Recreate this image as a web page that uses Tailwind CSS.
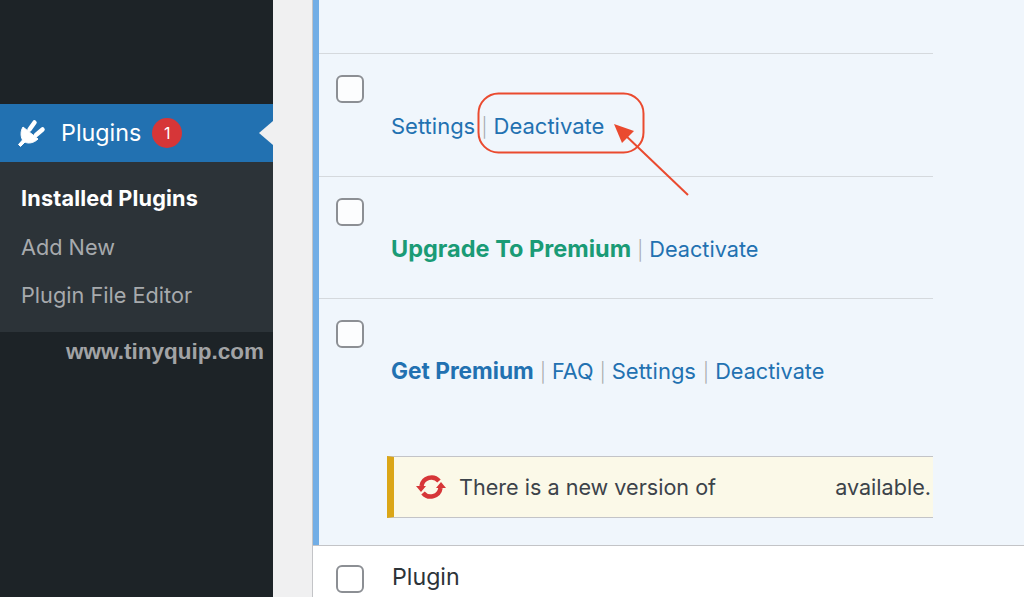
<!DOCTYPE html>
<html lang="en">
<head>
    <meta charset="UTF-8" />
    <title>Plugins</title>
    <script src="https://cdn.jsdelivr.net/npm/@tailwindcss/browser@4"></script>
</head>
<body class="bg-[#f0f0f1] font-['Inter','Liberation_Sans',sans-serif] overflow-hidden">
<div class="relative flex h-[597px] w-[1024px] overflow-hidden">
    <!-- sidebar -->
    <aside class="w-[273px] shrink-0 bg-[#1d2327] pt-[104px]">
        <div class="relative flex h-[58px] items-center bg-[#2271b1] pl-[17px] text-white">
            <svg class="h-[29px] w-[29px]" viewBox="0 0 29 29" fill="#fff" stroke="#fff" stroke-linejoin="round">
                <path stroke-width="1" d="M6 8L21 20C17 24 11 25 8 23L3.5 27.5 1.5 25.5 5.5 21C3.5 17 3.5 12 6 8z" />
                <path stroke-width="4.5" stroke-linecap="round" d="M12.5 10.5L17.5 3.5M19 16L25.5 10.5" />
            </svg>
            <span class="ml-[15px] text-[23.3px] leading-none">Plugins</span>
            <span class="ml-[11px] flex h-[30px] w-[30px] items-center justify-center rounded-full bg-[#d63638] text-[16px] leading-none">1</span>
            <span class="absolute right-0 top-[17px] h-0 w-0 border-y-[12px] border-r-[14px] border-y-transparent border-r-[#f0f0f1]"></span>
        </div>
        <nav class="flex h-[170px] flex-col bg-[#2c3338] pl-[21px] pt-[12px] text-[21.7px] leading-[48.5px] text-[#a7aaad]">
            <a class="font-bold tracking-[0.15px] text-white">Installed Plugins</a>
            <a>Add New</a>
            <a>Plugin File Editor</a>
        </nav>
        <p class="ml-[66px] mt-[6px] text-[22.5px] font-bold leading-[28px] text-[#a2a3a5] font-['Liberation_Sans',sans-serif]">www.tinyquip.com</p>
    </aside>

    <!-- plugin table -->
    <main class="ml-[39px] flex-1 border-l border-[#c3c4c7]">
        <section class="border-l-[6px] border-[#72aee6] bg-[#f0f6fc] h-[545px] pr-[91px]">
            <div class="h-[54px] border-b border-[#d5d9dd]"></div>
            <div class="h-[123px] border-b border-[#d5d9dd] pl-[17px] pt-[21px]">
                <span class="block h-[28px] w-[28px] rounded-[6px] border-2 border-[#8c8f94] bg-white/80"></span>
                <p class="ml-[55px] mt-[7px] text-[22px] leading-[32px] text-[#2271b1]">Settings <span class="text-[19px] font-light text-[#a7aaad]">|</span> Deactivate</p>
            </div>
            <div class="h-[122px] border-b border-[#d5d9dd] pl-[17px] pt-[21px]">
                <span class="block h-[28px] w-[28px] rounded-[6px] border-2 border-[#8c8f94] bg-white/80"></span>
                <p class="ml-[55px] mt-[7px] text-[21.7px] leading-[32px] text-[#2271b1]"><b class="text-[23.5px] font-bold text-[#1a9b76]">Upgrade To Premium</b> <span class="text-[19px] font-light text-[#a7aaad]">|</span> Deactivate</p>
            </div>
            <div class="pl-[17px] pt-[21px]">
                <span class="block h-[28px] w-[28px] rounded-[6px] border-2 border-[#8c8f94] bg-white/80"></span>
                <p class="ml-[55px] mt-[7px] text-[21.7px] leading-[32px] text-[#2271b1]"><b class="text-[22.7px] font-bold">Get Premium</b> <span class="text-[19px] font-light text-[#a7aaad]">|</span> FAQ <span class="text-[19px] font-light text-[#a7aaad]">|</span> <span class="text-[22px]">Settings</span> <span class="ml-[1px] text-[19px] font-light text-[#a7aaad]">|</span> Deactivate</p>
                <div class="mt-[67px] ml-[51px] flex h-[62px] items-center border-y border-[#c3c4c7] border-l-[7px] border-l-[#dba617] bg-[#fbf9e8] pl-[22px] text-[21.6px] text-[#3c434a]">
                    <svg class="h-[24px] w-[30px] shrink-0" viewBox="0 0 30 24" fill="none">
                        <path d="M5.5 11A10 10 0 0 1 23 6" stroke="#d63638" stroke-width="4.5" />
                        <path d="M24.5 13A10 10 0 0 1 7 18" stroke="#d63638" stroke-width="4.5" />
                        <path d="M0 11h10l-5 6zM20 13h10l-5-6z" fill="#d63638" />
                    </svg>
                    <span class="ml-[13px]">There is a new version of</span>
                    <span class="ml-[119px]">available.</span>
                </div>
            </div>
        </section>
        <div class="h-[52px] bg-white pl-[23px] pt-[19px] border-t border-[#c3c4c7] flex">
            <span class="block h-[28px] w-[28px] rounded-[6px] border-2 border-[#8c8f94]"></span>
            <span class="ml-[28px] -mt-[2px] text-[23.2px] leading-[28px] text-[#2c3338]">Plugin</span>
        </div>
    </main>

    <!-- red annotation over the screenshot -->
    <svg class="absolute inset-0" width="1024" height="597" fill="none">
        <rect x="478.5" y="93.5" width="165" height="59" rx="20" stroke="#ea4a2f" stroke-width="2" />
        <path d="M688 195L623 133" stroke="#ea4a2f" stroke-width="2" />
        <path d="M614 124L634 131 622 143z" fill="#ea4a2f" />
    </svg>
</div>
</body>
</html>
